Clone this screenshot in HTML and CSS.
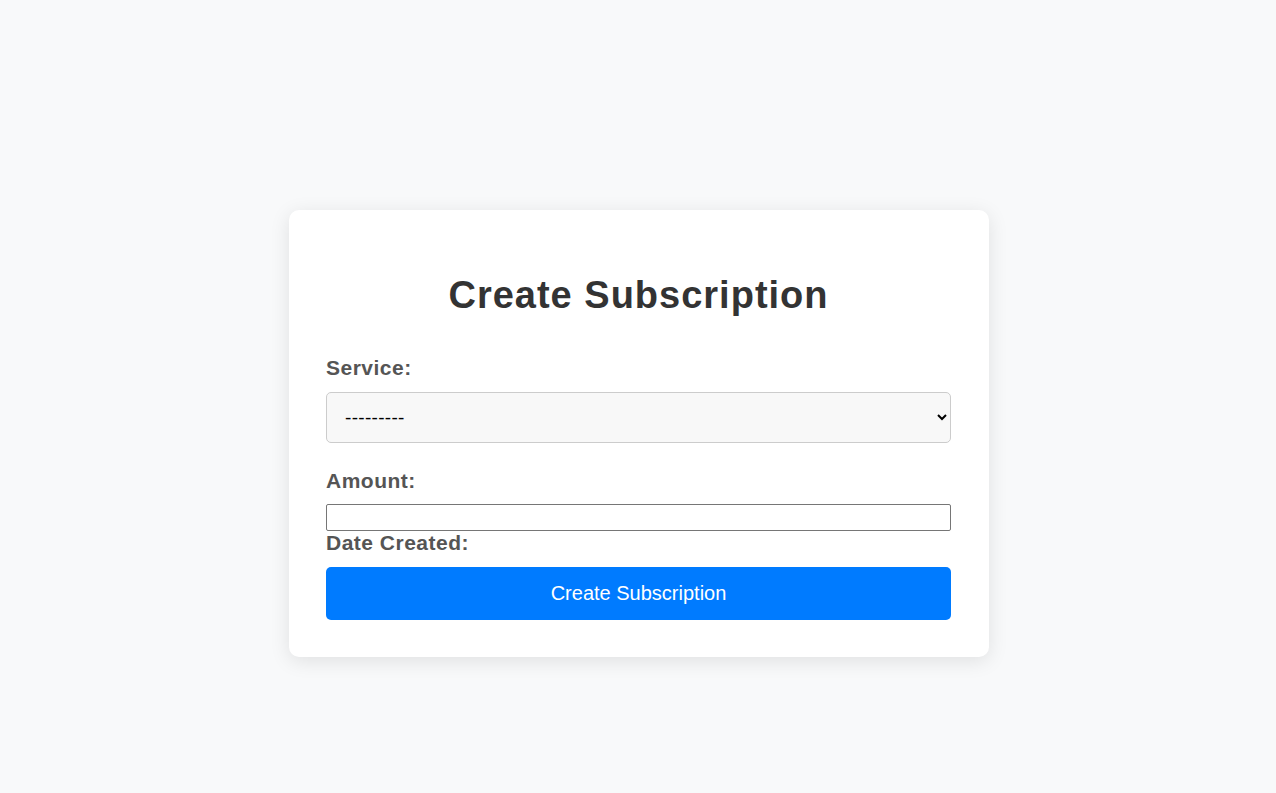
FILE: index.html
```html
<!DOCTYPE html>
<html lang="en">
<head>
<meta charset="utf-8">
<title>Create Subscription</title>
<link rel="stylesheet" href="styles.css">
</head>
<body>
<div class="page">
  <div class="card">
    <h1 class="title">Create Subscription</h1>
    <form class="form">
      <label class="label" for="service">Service:</label>
      <select class="select" id="service">
        <option>---------</option>
      </select>
      <label class="label label-amount" for="amount">Amount:</label>
      <input class="input" id="amount" type="text">
      <label class="label" for="date">Date Created:</label>
      <button class="button" type="button">Create Subscription</button>
    </form>
  </div>
</div>
</body>
</html>
```
FILE: styles.css
```css
html, body {
  margin: 0;
  padding: 0;
}
body {
  background: #f8f9fa;
  font-family: "Liberation Sans", Arial, sans-serif;
}
.page {
  min-height: 793px;
  box-sizing: border-box;
  padding: 74px 0 0 2px;
  display: flex;
  align-items: center;
  justify-content: center;
}
.card {
  width: 700px;
  box-sizing: border-box;
  background: #fff;
  border-radius: 10px;
  box-shadow: 0 4px 20px rgba(0, 0, 0, 0.1);
  padding: 37px 38px 37px 37px;
}
.title {
  margin: 28px 0 40px;
  text-align: center;
  font-size: 38px;
  line-height: 41px;
  letter-spacing: 1px;
  color: #333;
  font-weight: bold;
}
.form {
  display: flex;
  flex-direction: column;
}
.label {
  display: block;
  font-size: 21px;
  line-height: 24px;
  letter-spacing: 0.5px;
  font-weight: bold;
  color: #555;
  margin-bottom: 12px;
}
.label-amount {
  margin-bottom: 11px;
}
.select {
  height: 51px;
  box-sizing: border-box;
  width: 100%;
  padding: 0 12px 0 14px;
  font-size: 19px;
  letter-spacing: 0.3px;
  font-family: "Liberation Sans", Arial, sans-serif;
  background: #f8f8f8;
  border: 1px solid #ccc;
  border-radius: 5px;
  margin-bottom: 26px;
  color: #000;
}
.input {
  height: 27px;
  box-sizing: border-box;
  width: 100%;
  margin: 0;
  border: 1px solid #767676;
  border-radius: 2px;
  padding: 1px 2px;
  font-size: 18px;
}
.button {
  height: 53px;
  width: 100%;
  border: none;
  border-radius: 5px;
  background: #007bff;
  color: #fff;
  font-size: 20px;
  font-family: "Liberation Sans", Arial, sans-serif;
  cursor: pointer;
}
```
